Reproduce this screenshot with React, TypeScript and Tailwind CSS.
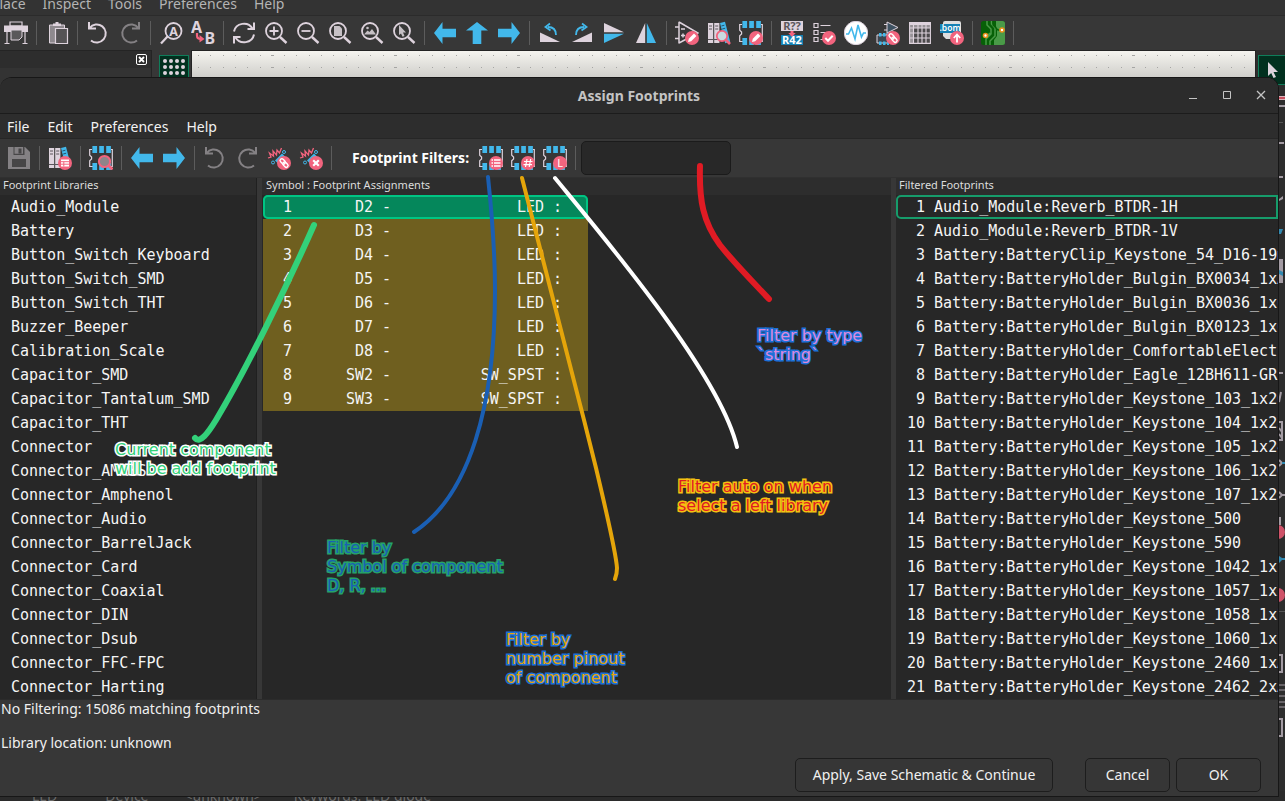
import React from "react";

type IconProps = { children: React.ReactNode };

const Icon = ({ children }: IconProps) => (
  <svg viewBox="0 0 24 24" className="block size-6" fill="none" aria-hidden="true">
    {children}
  </svg>
);

const PALE = "#ded3dd";
const BLUE = "#42b8eb";
const PINK = "#f2647e";
const GRAY = "#848184";

const Badge = ({ children }: { children?: React.ReactNode }) => (
  <>
    <circle cx="17" cy="17" r="7" fill={PINK} />
    {children}
  </>
);
const Pencil = () => <path d="M13 21l.8-3.200 5.200-5.200 2.400 2.400-5.200 5.200z" fill="#fff" />;
const LinkMark = () => (
  <g stroke="#fff" strokeWidth="1.4" transform="rotate(45 17 17)">
    <rect x="12" y="15" width="6" height="3.6" rx="1.8" />
    <rect x="16.2" y="15.4" width="6" height="3.6" rx="1.8" />
  </g>
);

const Chip = ({ children }: { children?: React.ReactNode }) => (
  <Icon>
    <path d="M3 3.5H.7V9.2L2.6 11v2L.7 14.8v5.7H4M22 3.5h1.3v17H21" stroke={PALE} strokeWidth="1.2" />
    <path d="M3.4 0h4.7v7H3.4zM10.2 0h4.7v7h-4.7zM17.2 0h4.7v7h-4.7zM3.4 17h4.7v7H3.4zM10.2 17h4.7v7h-4.7zM17.2 17h4.7v7h-4.7z" fill={BLUE} />
    {children}
  </Icon>
);

const Books = ({ children }: { children?: React.ReactNode }) => (
  <Icon>
    <path d="M1 2h5.2v20H1zM7.2 2h5.2v20H7.2z" fill={PALE} />
    <path d="M2 5h3M2 8h3M8.2 5h3M8.2 8h3M1 18.5h11.4" stroke="#5a555b" strokeWidth="1" />
    <path d="M13 2l5-1.2 5.2 20-5 1.5z" fill={BLUE} />
    <path d="M14.4 5l3-.8M15.2 8l3-.8" stroke="#28536c" strokeWidth="1" />
    {children}
  </Icon>
);

const Undo = ({ color }: { color: string }) => (
  <Icon>
    <path d="M3 1v6.6h7M3.6 7A9 9 0 1 1 5 19.4" stroke={color} strokeWidth="2" />
  </Icon>
);
const Redo = ({ color }: { color: string }) => (
  <Icon>
    <path d="M21 1v6.6h-7M20.4 7A9 9 0 1 0 19 19.4" stroke={color} strokeWidth="2" />
  </Icon>
);
const ArrowLeft = () => (
  <Icon><path d="M1 12L9.5 1v6.7H23v8.6H9.5V23z" fill={BLUE} /></Icon>
);
const ArrowRight = () => (
  <Icon><path d="M23 12L14.5 1v6.7H1v8.6h13.5V23z" fill={BLUE} /></Icon>
);
const ArrowUp = () => (
  <Icon><path d="M12 1l11 8.500h-6.700V23H7.700V9.500H1z" fill={BLUE} /></Icon>
);
const Lens = ({ children }: { children?: React.ReactNode }) => (
  <Icon>
    <circle cx="10" cy="10" r="8" stroke={PALE} strokeWidth="1.8" />
    <path d="M16 16l6.500 6" stroke={PALE} strokeWidth="2.4" />
    {children}
  </Icon>
);
const Resistor = ({ children }: { children?: React.ReactNode }) => (
  <Icon>
    <path d="M1 12l3-1-1.500-4 4 3-.5-5 3.500 4 .5-5 2.500 3 2-5" stroke={PINK} strokeWidth="1.3" />
    <path d="M8 14.500l7-7 3.500 3.500-7 7z" fill={BLUE} />
    <circle cx="6" cy="16.500" r="1.5" stroke={BLUE} />
    <circle cx="17" cy="6" r="1.500" stroke={BLUE} />
    {children}
  </Icon>
);

const mainTools: (null | [string, React.ReactNode])[] = [
  ["Print", <Icon><path d="M6 1h12v4H6z" stroke={PALE} strokeWidth="1.2" /><path d="M0 4.500h24V11H0z" fill={PALE} /><path d="M7 9h11v7l-3 3H7z" fill="#5a585a" stroke={PALE} strokeWidth="1" /><path d="M3 11v11.500M21 11v11.500M.5 22.500h5M18.500 22.500h5" stroke={PALE} strokeWidth="1.2" /></Icon>],
  null,
  ["Paste", <Icon><path d="M4.500 4h15v18h-15z" fill="#8e898e" stroke={PALE} strokeWidth="1" /><path d="M8 2.500h2.500V1h3v1.500H16V5H8z" fill={PALE} /><path d="M10.500 7.500h12v15h-12z" fill="#555355" stroke={PALE} strokeWidth="1.2" /></Icon>],
  null,
  ["Undo", <Undo color={PALE} />],
  ["Redo", <Redo color={GRAY} />],
  null,
  ["Find", <Icon><circle cx="14.500" cy="10" r="8" stroke={PALE} strokeWidth="1.8" /><path d="M8.500 15.500L2 22.500" stroke={PALE} strokeWidth="2.2" /><text x="14.500" y="14.500" textAnchor="middle" fontFamily="Noto Sans" fontWeight="700" fontSize="12.500" fill={PALE}>A</text></Icon>],
  ["Find and replace", <Icon><text x="0" y="12" fontFamily="Noto Sans" fontWeight="700" fontSize="16" fill={PALE}>A</text><text x="13.500" y="23" fontFamily="Noto Sans" fontWeight="700" fontSize="16" fill={PALE}>B</text><path d="M6 12v2.500Q6 18 10 18" stroke={PINK} strokeWidth="2.2" /><path d="M8.500 14l5 4-5 3.500z" fill={PINK} /></Icon>],
  null,
  ["Refresh", <Icon><path d="M2 10.500A10 9.500 0 0 1 20.500 7.500M22 13.500A10 9.500 0 0 1 3.500 16.500" stroke={PALE} strokeWidth="2" /><path d="M22 1.500V8h-6.500M2 22.500V16h6.500" stroke={PALE} strokeWidth="2" /></Icon>],
  ["Zoom in", <Lens><path d="M10 5.500v9M5.500 10h9" stroke={PALE} strokeWidth="1.800" /></Lens>],
  ["Zoom out", <Lens><path d="M5.500 10h9" stroke={PALE} strokeWidth="1.800" /></Lens>],
  ["Zoom to fit", <Lens><path d="M6 5h5.500L14 7.500V15H6z" fill="#c6c0c5" /></Lens>],
  ["Zoom to objects", <Lens><path d="M4 13.500l3.500-4 2 1.500L12 8l4 5.500z" fill="#c6c0c5" /><circle cx="7.500" cy="7" r="1.300" fill="#c6c0c5" /></Lens>],
  ["Zoom to selection", <Lens><path d="M7 4l7 7.500h-3l1.500 3.500-2 .8L9 12.500 7 14z" fill="#c6c0c5" /></Lens>],
  null,
  ["Back", <ArrowLeft />],
  ["Up", <ArrowUp />],
  ["Forward", <ArrowRight />],
  null,
  ["Rotate left", <Icon><path d="M2 11.500L22 21H2z" fill={PALE} /><path d="M18 14c0-5-3-8-8-8" stroke={BLUE} strokeWidth="1.800" /><path d="M12 2.500L7.500 6l5 3.500" stroke={BLUE} strokeWidth="1.800" /></Icon>],
  ["Rotate right", <Icon><path d="M22 11.500L2 21h20z" fill={PALE} /><path d="M6 14c0-5 3-8 8-8" stroke={BLUE} strokeWidth="1.800" /><path d="M12 2.500L16.500 6l-5 3.500" stroke={BLUE} strokeWidth="1.800" /></Icon>],
  ["Mirror vertically", <Icon><path d="M2 2l20 9.200H2z" fill={PALE} /><path d="M2 12.800h20L2 22z" fill={BLUE} /></Icon>],
  ["Mirror horizontally", <Icon><path d="M2 22L11.200 2v20z" fill={PALE} /><path d="M12.800 2L22 22h-9.200z" fill={BLUE} /></Icon>],
  null,
  ["Symbol editor", <Icon><path d="M4 .8V22.500M4 1l19 11L4 22M0 6h4M0 17.500h4M6 8h4M6 14.500h4M8 12.500v4" stroke={PALE} strokeWidth="1.500" /><Badge><Pencil /></Badge></Icon>],
  ["Symbol library browser", <Books><circle cx="15" cy="15" r="5.200" fill="#c9dbe2" stroke={PINK} strokeWidth="1.800" /><path d="M18.500 18.500l4.500 4.500" stroke={PINK} strokeWidth="2.600" /></Books>],
  ["Footprint editor", <Chip><Badge><Pencil /></Badge></Chip>],
  null,
  ["Annotate", <Icon><path d="M1 0h22v10H1z" fill={PALE} /><path d="M1 14h22v10H1z" fill="#1581b4" /><path d="M10.500 10h3v2h2.200L12 16l-3.700-4h2.200z" fill={PINK} /><text x="12" y="9" textAnchor="middle" fontFamily="Noto Sans" fontWeight="700" fontSize="11" fill="#5c575c">R??</text><text x="12" y="23" textAnchor="middle" fontFamily="Noto Sans" fontWeight="700" fontSize="11" fill="#fff">R42</text></Icon>],
  ["Electrical rules checker", <Icon><path d="M2 2.500h4v4H2zM2 9.500h4v4H2zM2 16.500h4v4H2zM8.500 4.500h10M8.500 11.500h7M8.500 18.500h4" stroke={PALE} strokeWidth="1.200" /><Badge><path d="M13.300 17l2.700 2.700 4.700-5" stroke="#fff" strokeWidth="2" /></Badge></Icon>],
  ["Simulator", <Icon><circle cx="12" cy="12" r="11.700" fill="#fff" stroke={PALE} strokeWidth="1" /><path d="M2 13h2.500L7.500 7l3.500 11 3-14 3.500 12 2-4H22" stroke={BLUE} strokeWidth="1.600" /></Icon>],
  ["Assign footprints", <Icon><path d="M11 1v13M11 1l11 5.500-11 5.500M8 3.500h3M8 9h3" fill="#3e5262" stroke={PALE} strokeWidth="1" /><path d="M1 14h11v8H1z" fill="#3c4650" stroke={PALE} strokeWidth="1" /><path d="M3 12h2.500v3.500H3zM7 12h2.500v3.500H7zM11 12h2v3.500h-2zM3 20.500h2.500V24H3zM7 20.500h2.500V24H7zM11 20.500h2V24h-2z" fill={BLUE} /><Badge><LinkMark /></Badge></Icon>],
  ["Symbol fields table", <Icon><path d="M1 1h22v22H1z" fill="#4c4a4c" /><path d="M1 1h22v6H1zM1 1h4v22H1z" fill="#969196" /><path d="M1 2.500h22" stroke={PALE} strokeWidth="3" /><path d="M1.600 7h21M1.600 12h21M1.600 17h21M1.600 22.400h21M1.600 1v22M5.500 4v19M10 4v19M14 4v19M18 4v19M22.400 1v22" stroke={PALE} strokeWidth="1.100" /></Icon>],
  ["Bill of materials", <Icon><path d="M5 0h14q2 0 2 2v16H6l-3-3V2q0-2 2-2z" fill="#dedede" /><path d="M0 3h20v9H0z" fill="#1581b4" /><text x="10" y="10" textAnchor="middle" fontFamily="Noto Sans" fontWeight="600" fontSize="8.500" fill="#fff">.bom</text><Badge><path d="M17 21.500v-7M13.800 17l3.200-3.500 3.200 3.500" stroke="#fff" strokeWidth="1.800" /></Badge></Icon>],
  null,
  ["PCB editor", <Icon><rect width="24" height="24" rx="2.500" fill="#076007" /><path d="M15 0h6.500Q24 0 24 2.500v19q0 2.500-2.500 2.500H13v-5l3-4V9l-1-4z" fill="#4a9a48" /><path d="M6 0v4l4 4v5l-5 5v6M10.500 0v3l3.500 4v8l-5 5v4M4.500 14H7l2-2" stroke="#4a9a48" strokeWidth="1.500" /><path d="M12 19v5M16 8l-4-4V0M21 9h-4l-3-3" stroke="#076007" strokeWidth="1.300" /><circle cx="4.500" cy="14.500" r="2" fill="#fff" stroke="#ea8f1c" strokeWidth="1.600" /><circle cx="21" cy="9" r="2" fill="#fff" stroke="#ea8f1c" strokeWidth="1.600" /></Icon>],
  null,
];

const dialogTools: (null | [string, React.ReactNode])[] = [
  ["Save", <Icon><path d="M1 1h17l5 5v17H1z" fill={GRAY} /><path d="M6.500 1h11v8h-11z" fill="#474647" /><path d="M7.500 1h8.500v6.800H7.500z" fill={GRAY} /><path d="M11.500 2.500h3v5h-3z" fill="#474647" /><path d="M5 13h14v8H5z" fill="#474647" /></Icon>],
  null,
  ["Footprint library table", <Books><Badge><path d="M13 13.500h8v7h-8z" fill="#fff" /><path d="M13 15.700h8M13 18.200h8M15.800 15.700v4.800" stroke={PINK} strokeWidth="1" /></Badge></Books>],
  null,
  ["Footprint viewer", <Chip><circle cx="15.500" cy="15.500" r="5.600" fill="#8f8489" stroke={PINK} strokeWidth="2" /><path d="M19.500 19.500l4 4" stroke={PINK} strokeWidth="2.800" /></Chip>],
  null,
  ["Previous unassigned", <ArrowLeft />],
  ["Next unassigned", <ArrowRight />],
  null,
  ["Undo", <Undo color={GRAY} />],
  ["Redo", <Redo color={GRAY} />],
  ["Auto-associate footprints", <Resistor><Badge><LinkMark /></Badge></Resistor>],
  ["Delete all associations", <Resistor><Badge><path d="M14.200 14.200l5.600 5.600M19.800 14.200l-5.600 5.600" stroke="#fff" strokeWidth="2.200" /></Badge></Resistor>],
  null,
];

const filterTools: [string, React.ReactNode][] = [
  ["Filter by symbol footprint filters", <Chip><Badge><path d="M12.500 14h1.500M15 14h6.500M12.500 17h1.500M15 17h6.500M12.500 20h1.500M15 20h6.500" stroke="#fff" strokeWidth="1.700" /></Badge></Chip>],
  ["Filter by pin count", <Chip><Badge><path d="M16 13l-1.500 8M19.700 13l-1.500 8M13 15.500h8.500M12.500 18.600H21" stroke="#fff" strokeWidth="1.200" /></Badge></Chip>],
  ["Filter by library", <Chip><Badge><text x="17.200" y="21" textAnchor="middle" fontFamily="Noto Sans" fontSize="11" fill="#fff">L</text></Badge></Chip>],
];

const Tools = ({ items }: { items: (null | [string, React.ReactNode])[] }) => (
  <>
    {items.map((item, i) =>
      item === null ? (
        <span key={i} className="h-6 w-px shrink-0 bg-[#5c5c5c]" />
      ) : (
        <button key={i} type="button" aria-label={item[0]} className="size-6 shrink-0">
          {item[1]}
        </button>
      ),
    )}
  </>
);

const libraries = [
  "Audio_Module", "Battery", "Button_Switch_Keyboard", "Button_Switch_SMD", "Button_Switch_THT",
  "Buzzer_Beeper", "Calibration_Scale", "Capacitor_SMD", "Capacitor_Tantalum_SMD", "Capacitor_THT",
  "Connector", "Connector_AMASS", "Connector_Amphenol", "Connector_Audio", "Connector_BarrelJack",
  "Connector_Card", "Connector_Coaxial", "Connector_DIN", "Connector_Dsub", "Connector_FFC-FPC",
  "Connector_Harting",
];

const symbols = [
  ["D2", "LED"], ["D3", "LED"], ["D4", "LED"], ["D5", "LED"], ["D6", "LED"],
  ["D7", "LED"], ["D8", "LED"], ["SW2", "SW_SPST"], ["SW3", "SW_SPST"],
];

const footprints = [
  "Audio_Module:Reverb_BTDR-1H", "Audio_Module:Reverb_BTDR-1V",
  "Battery:BatteryClip_Keystone_54_D16-19mm",
  "Battery:BatteryHolder_Bulgin_BX0034_1xAA",
  "Battery:BatteryHolder_Bulgin_BX0036_1xC",
  "Battery:BatteryHolder_Bulgin_BX0123_1xCR123",
  "Battery:BatteryHolder_ComfortableElectronic_CH273-2450_1x2450",
  "Battery:BatteryHolder_Eagle_12BH611-GR",
  "Battery:BatteryHolder_Keystone_103_1x20mm",
  "Battery:BatteryHolder_Keystone_104_1x23mm",
  "Battery:BatteryHolder_Keystone_105_1x2430",
  "Battery:BatteryHolder_Keystone_106_1x20mm",
  "Battery:BatteryHolder_Keystone_107_1x23mm",
  "Battery:BatteryHolder_Keystone_500", "Battery:BatteryHolder_Keystone_590",
  "Battery:BatteryHolder_Keystone_1042_1x18650",
  "Battery:BatteryHolder_Keystone_1057_1x2032",
  "Battery:BatteryHolder_Keystone_1058_1x2032",
  "Battery:BatteryHolder_Keystone_1060_1x2032",
  "Battery:BatteryHolder_Keystone_2460_1xAA",
  "Battery:BatteryHolder_Keystone_2462_2xAA",
];

const MainWindow = () => (
  <div className="flex h-full flex-col bg-[#373737]">
    <nav className="flex h-4 items-end gap-[17px] overflow-hidden border-b border-[#2b2b2b] bg-[#333333] text-sm leading-[22px] text-[#b4b4b4]">
      <a href="#place" className="-ml-[9px]">Place</a>
      <a href="#inspect">Inspect</a>
      <a href="#tools">Tools</a>
      <a href="#preferences">Preferences</a>
      <a href="#help">Help</a>
    </nav>
    <div className="flex h-[34px] shrink-0 items-center gap-2 overflow-hidden pl-1">
      <Tools items={mainTools} />
    </div>
    <div className="flex min-h-0 flex-1">
      <div className="w-[152px] border-t border-r border-[#242424] bg-[#333333]">
        <div className="flex h-[17px] items-center justify-end bg-[#2d2d2d] pr-1">
          <button type="button" aria-label="Close panel">
            <svg viewBox="0 0 11 11" className="block size-[11px]" fill="none" stroke="#fff">
              <rect x=".5" y=".5" width="10" height="10" rx="1.500" />
              <path d="M3 3l5 5M8 3l-5 5" strokeWidth="1.800" />
            </svg>
          </button>
        </div>
      </div>
      <div className="w-[39px] pt-[5px] pl-[7px]">
        <button type="button" aria-label="Toggle grid" className="block border border-[#0f7d5a] bg-[#02301f]">
          <svg viewBox="0 0 28 28" className="block size-7" fill={PALE}>
            {[0, 1, 2, 3].map((r) =>
              [0, 1, 2, 3].map((c) => <circle key={`${r}-${c}`} cx={5 + c * 6} cy={5 + r * 6} r="2" />),
            )}
          </svg>
        </button>
      </div>
      <div className="flex-1 overflow-hidden border border-b-0 border-[#242424]">
        <div className="h-[26px] bg-linear-to-b from-[#f5f4ef] to-[#d0cfcb]">
          <svg className="block h-[26px] w-[1064px]" fill="#a5a5a3" aria-hidden="true">
            {Array.from({ length: 87 }, (_, i) => {
              const wide = i % 10 === 6;
              const x = Math.round(6 + i * 12.3) - (wide ? 1 : 0);
              return (
                <g key={i}>
                  <rect x={x} y="4" width={wide ? 3 : 1} height="1" />
                  <rect x={x} y="16" width={wide ? 3 : 1} height="1" />
                </g>
              );
            })}
          </svg>
        </div>
      </div>
      <div className="w-[29px] overflow-hidden bg-[#2d2d2d] pt-[5px] pl-0.5">
        <button type="button" aria-label="Select" className="block border border-[#0f7d5a] bg-[#02301f]">
          <svg viewBox="0 0 28 28" className="block size-7">
            <path d="M9 6l10 10h-4.500l2.500 5-2.500 1-2.300-5-3.200 3z" fill={PALE} />
          </svg>
        </button>
        <svg viewBox="1258 85 27 660" className="block h-[660px] w-[27px]" aria-hidden="true">
          <path d="M1279 96h6v4h-6z" fill="#d9b3bb" />
          <path d="M1279 97h6v2h-6z" fill="#c8505f" />
          <path d="M1279 105h6v2h-6zM1279 142h5v2h-5zM1279 176h4v2h-4zM1279 199l4-3v3l-4 2zM1279 259h4v24h-4zM1279 372h4v2h-4z" fill="#a39ba3" />
          <path d="M1279 122h4v1h-4zM1279 611h6v1h-6z" fill="#555" />
          <path d="M1279 229h4l-2 5h-2zM1279 270l4 2v4l-4-2zM1279 556l3 2h4v2h-4l-3 3z" fill="#3289b0" />
          <circle cx="1278" cy="532" r="7" fill="#cf5369" />
          <circle cx="1278" cy="595" r="7" fill="#cf5369" />
          <path d="M1279 402l2-10M1279 422h3v18h-3M1279 428l3 4M1279 434l3 4M1279 460l3 3-3 3M1279 492l3 3-3 3M1282 495h3M1280 517v8M1279 655h3v17h-3M1279 719h3v17h-3" fill="none" stroke="#a39ba3" strokeWidth="2" />
          <path d="M1282 462h3v2h-3z" fill="#3289b0" />
          <path d="M1279 685h6M1279 690h6M1279 696h6M1279 702h6M1279 707h6" stroke="#a39ba3" />
        </svg>
      </div>
    </div>
    <footer className="flex h-[10px] shrink-0 gap-12 overflow-hidden bg-[#2b2b2b] pl-8 text-sm leading-[9px] text-[#6a6a6a]">
      <span>LED</span>
      <span>Device</span>
      <span className="-ml-3">&lt;unknown&gt;</span>
      <span className="-ml-4">Keywords: LED diode</span>
    </footer>
  </div>
);

const mono = "font-['DejaVu_Sans_Mono','Liberation_Mono',monospace] text-[15px] leading-6 text-[#f5f5f5]";
const paneTitle = "h-[17px] bg-[#2d2d2d] text-[11px] leading-[14px] text-[#dcdcdc]";
const pushButton =
  "h-[34px] rounded-[5px] border border-[#1d1d1d] bg-[#363636] text-sm text-[#f0f0f0]";

const Dialog = () => (
  <section
    role="dialog"
    aria-label="Assign Footprints"
    className="absolute inset-x-0 top-[77px] mr-1.5 overflow-hidden rounded-t-xl border border-l-0 border-[#171717] bg-[#373737]"
  >
    <header className="grid h-9 grid-cols-[1fr_auto_1fr] items-center border-b border-[#1c1c1c] bg-[#2c2c2c]">
      <h1 className="col-start-2 text-sm font-bold text-[#c4c4c4]">Assign Footprints</h1>
      <div className="flex justify-end gap-5 pr-2.5">
        <button type="button" aria-label="Minimize">
          <svg viewBox="0 0 14 14" className="block size-3.5" fill="none" stroke="#c4c4c4"><path d="M3 9.500h8" /></svg>
        </button>
        <button type="button" aria-label="Maximize">
          <svg viewBox="0 0 14 14" className="block size-3.5" fill="none" stroke="#c4c4c4"><path d="M3.500 2.500h7v7h-7z" /></svg>
        </button>
        <button type="button" aria-label="Close">
          <svg viewBox="0 0 14 14" className="block size-3.5" fill="none" stroke="#c4c4c4" strokeWidth="1.300"><path d="M3 2l8 8M11 2l-8 8" /></svg>
        </button>
      </div>
    </header>
    <nav className="flex h-[25px] items-center gap-[18px] border-b border-[#262626] bg-[#2d2d2d] pt-0.5 pl-[7px] text-sm text-[#f2f2f2]">
      <a href="#file">File</a>
      <a href="#edit">Edit</a>
      <a href="#dialog-preferences">Preferences</a>
      <a href="#dialog-help">Help</a>
    </nav>
    <div className="flex h-[39px] items-center gap-2 border-b border-[#303030] pl-[7px]">
      <Tools items={dialogTools} />
      <label htmlFor="filter" className="ml-3 w-[119px] text-sm font-bold whitespace-nowrap text-white">
        Footprint Filters:
      </label>
      <Tools items={filterTools} />
      <span className="h-6 w-px bg-[#5c5c5c]" />
      <input
        id="filter"
        type="text"
        className="-ml-[3px] h-[34px] w-[150px] rounded-[5px] border border-[#1b1b1b] bg-[#282828] px-2 text-sm text-white"
      />
    </div>
    <div className="grid grid-cols-[257px_minmax(0,1fr)_382px] gap-x-[5px]">
      <div className="border-r border-[#202020] bg-[#272727]">
        <h2 className={`${paneTitle} pl-[3px]`}>Footprint Libraries</h2>
        <ul className={`${mono} pl-[11px]`}>
          {libraries.map((name) => <li key={name}>{name}</li>)}
        </ul>
      </div>
      <div className="bg-[#272727]">
        <h2 className={`${paneTitle} pl-1`}>Symbol : Footprint Assignments</h2>
        <table className={`${mono} ml-px block w-[325px] text-right`}>
          <tbody className="block">
            {symbols.map(([ref, value], i) => (
              <tr
                key={ref}
                className={
                  i === 0
                    ? "flex h-6 rounded-[5px] bg-[#05875b] outline-2 -outline-offset-2 outline-[#00c583]"
                    : "flex h-6 bg-[#6f5f1f]"
                }
              >
                <td className="w-[29px]">{i + 1}</td>
                <td className="w-[81px]">{ref}</td>
                <td className="w-[18px]">-</td>
                <td className="w-[153px]">{value}</td>
                <td className="w-[18px]">:</td>
              </tr>
            ))}
          </tbody>
        </table>
      </div>
      <div className="overflow-hidden bg-[#272727]">
        <h2 className={`${paneTitle} pl-[3px]`}>Filtered Footprints</h2>
        <ol className={mono}>
          {footprints.map((name, i) => (
            <li
              key={name}
              className={
                i === 0
                  ? "flex h-6 gap-[9px] rounded-l-[5px] whitespace-nowrap outline-2 -outline-offset-2 outline-[#169c6b]"
                  : "flex h-6 gap-[9px] whitespace-nowrap"
              }
            >
              <span className="w-[29px] shrink-0 text-right">{i + 1}</span>
              <span>{name}</span>
            </li>
          ))}
        </ol>
      </div>
    </div>
    <div className="flex flex-col gap-4 border-t border-[#2b2b2b] pl-px text-sm leading-[18px] text-[#f0f0f0]">
      <p>No Filtering: 15086 matching footprints</p>
      <p>Library location: unknown</p>
    </div>
    <div className="flex justify-end pt-1.5 pr-[17px] pb-1">
      <button type="button" className={`${pushButton} w-[258px]`}>Apply, Save Schematic &amp; Continue</button>
      <button type="button" className={`${pushButton} ml-8 w-[85px]`}>Cancel</button>
      <button type="button" className={`${pushButton} ml-1.5 w-[85px]`}>OK</button>
    </div>
  </section>
);

const note =
  "absolute whitespace-pre font-['DejaVu_Sans',sans-serif] text-base leading-[19px] [paint-order:stroke_fill]";

const Annotations = () => (
  <div className="pointer-events-none absolute inset-0">
    <svg viewBox="0 0 1285 801" className="absolute top-0 left-0 h-[801px] w-[1285px]" fill="none" strokeLinecap="round" aria-hidden="true">
      <path d="M314 225C286 288 246 370 216 420C208 433 200 444 195 438" stroke="#33d17a" strokeWidth="6" />
      <path d="M488 177C492 215 495 250 495 290C495 405 470 495 414 532" stroke="#1a5fb4" strokeWidth="4" />
      <path d="M522 178L584 420L596 468C606 510 616 552 617 568Q617 574 615 579" stroke="#e5a50a" strokeWidth="4" />
      <path d="M555 178C610 245 720 375 737 447" stroke="#ffffff" strokeWidth="4" />
      <path d="M700 166C699 200 703 222 720 245C735 264 755 284 769 299" stroke="#e01b24" strokeWidth="6" />
    </svg>
    <p className={`${note} top-[440px] left-[115px] text-[#33d17a] [-webkit-text-stroke:3px_#ffffff]`}>{"Current component\nwill be add footprint"}</p>
    <p className={`${note} top-[538px] left-[327px] text-[#1a5fb4] [-webkit-text-stroke:3px_#26a269]`}>{"Filter by\nSymbol of component\nD, R, ..."}</p>
    <p className={`${note} top-[630px] left-[506px] text-[#e5a50a] [-webkit-text-stroke:3px_#1c71d8]`}>{"Filter by\nnumber pinout\nof component"}</p>
    <p className={`${note} top-[477px] left-[678px] text-[#e01b24] [-webkit-text-stroke:3px_#f5c211]`}>{"Filter auto on when\nselect a left library"}</p>
    <p className={`${note} top-[326px] left-[757px] text-[#dc8add] [-webkit-text-stroke:3px_#1c71d8]`}>{"Filter by type\n`string`"}</p>
  </div>
);

export default function App() {
  return (
    <main className="relative h-screen overflow-hidden bg-[#2b2b2b] font-['Noto_Sans','Open_Sans',sans-serif]">
      <MainWindow />
      <Dialog />
      <Annotations />
    </main>
  );
}
